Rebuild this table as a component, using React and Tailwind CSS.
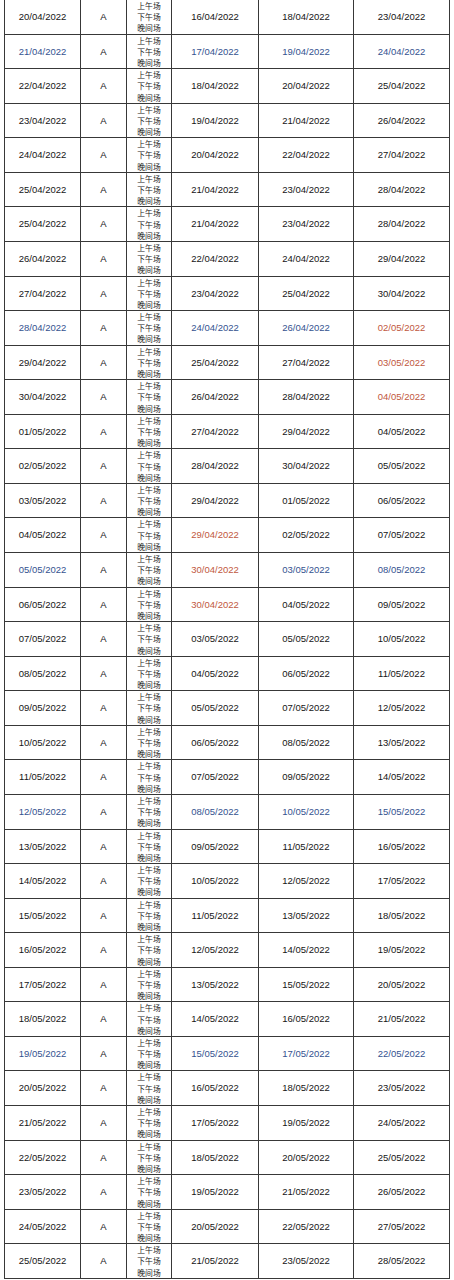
import React from "react";

const B = "b";
const R = "r";
const rows = [
  ["20/04", "16/04", "18/04", "23/04"],
  [["21/04", B], ["17/04", B], ["19/04", B], ["24/04", B]],
  ["22/04", "18/04", "20/04", "25/04"],
  ["23/04", "19/04", "21/04", "26/04"],
  ["24/04", "20/04", "22/04", "27/04"],
  ["25/04", "21/04", "23/04", "28/04"],
  ["25/04", "21/04", "23/04", "28/04"],
  ["26/04", "22/04", "24/04", "29/04"],
  ["27/04", "23/04", "25/04", "30/04"],
  [["28/04", B], ["24/04", B], ["26/04", B], ["02/05", R]],
  ["29/04", "25/04", "27/04", ["03/05", R]],
  ["30/04", "26/04", "28/04", ["04/05", R]],
  ["01/05", "27/04", "29/04", "04/05"],
  ["02/05", "28/04", "30/04", "05/05"],
  ["03/05", "29/04", "01/05", "06/05"],
  ["04/05", ["29/04", R], "02/05", "07/05"],
  [["05/05", B], ["30/04", R], ["03/05", B], ["08/05", B]],
  ["06/05", ["30/04", R], "04/05", "09/05"],
  ["07/05", "03/05", "05/05", "10/05"],
  ["08/05", "04/05", "06/05", "11/05"],
  ["09/05", "05/05", "07/05", "12/05"],
  ["10/05", "06/05", "08/05", "13/05"],
  ["11/05", "07/05", "09/05", "14/05"],
  [["12/05", B], ["08/05", B], ["10/05", B], ["15/05", B]],
  ["13/05", "09/05", "11/05", "16/05"],
  ["14/05", "10/05", "12/05", "17/05"],
  ["15/05", "11/05", "13/05", "18/05"],
  ["16/05", "12/05", "14/05", "19/05"],
  ["17/05", "13/05", "15/05", "20/05"],
  ["18/05", "14/05", "16/05", "21/05"],
  [["19/05", B], ["15/05", B], ["17/05", B], ["22/05", B]],
  ["20/05", "16/05", "18/05", "23/05"],
  ["21/05", "17/05", "19/05", "24/05"],
  ["22/05", "18/05", "20/05", "25/05"],
  ["23/05", "19/05", "21/05", "26/05"],
  ["24/05", "20/05", "22/05", "27/05"],
  ["25/05", "21/05", "23/05", "28/05"],
];

function DateCell({ v, last }) {
  const [d, c] = Array.isArray(v) ? v : [v, null];
  const color =
    c === B ? "text-[#34528f]" : c === R ? "text-[#bf5840]" : "text-[#151515]";
  return (
    <div
      className={`flex items-center justify-center ${last ? "" : "border-r border-[#383838]"} ${color}`}
    >
      {d}/2022
    </div>
  );
}

export default function App() {
  return (
    <div className="w-[454px] h-[1280px] overflow-hidden bg-white">
      <div
        className="ml-[4px] mt-[-1px] w-[446px] border-l border-r border-t border-[#383838] text-[9.5px] leading-none"
        style={{ fontFamily: '"Liberation Sans", Arial, "Noto Sans CJK SC", sans-serif' }}
      >
        {rows.map((r, i) => (
          <div
            key={i}
            className="grid grid-cols-[76px_46px_45px_87px_95px_95px] h-[34.57px] border-b border-[#383838]"
          >
            <DateCell v={r[0]} />
            <div className="flex items-center justify-center border-r border-[#383838] text-[#151515]">
              A
            </div>
            <div
              className="flex flex-col items-center justify-center border-r border-[#383838] text-[7.8px] leading-[11.2px] text-[#222222]"
              style={{ fontFamily: '"Noto Sans CJK SC", sans-serif' }}
            >
              <span>上午场</span>
              <span>下午场</span>
              <span>晚间场</span>
            </div>
            <DateCell v={r[1]} />
            <DateCell v={r[2]} />
            <DateCell v={r[3]} last />
          </div>
        ))}
      </div>
    </div>
  );
}
